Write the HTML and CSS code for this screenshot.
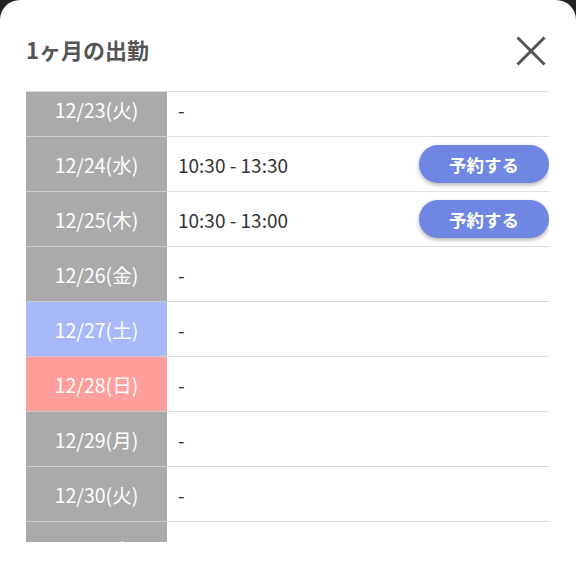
FILE: index.html
```html
<!DOCTYPE html>
<html lang="ja">
<head>
<meta charset="utf-8">
<link rel="stylesheet" href="styles.css">
</head>
<body>
<div class="sheet">
  <div class="header">
    <h1 class="title">1ヶ月の出勤</h1>
    <svg class="close" width="30" height="30" viewBox="0 0 30 30">
      <path d="M1.5 1.5 L28.5 28.5 M28.5 1.5 L1.5 28.5" stroke="#555" stroke-width="3" stroke-linecap="butt"/>
    </svg>
  </div>
  <div class="list">
    <div class="rows">
      <div class="row"><div class="date">12/23(火)</div><div class="cell">-</div></div>
      <div class="row"><div class="date">12/24(水)</div><div class="cell"><span>10:30 - 13:30</span><button class="reserve">予約する</button></div></div>
      <div class="row"><div class="date">12/25(木)</div><div class="cell"><span>10:30 - 13:00</span><button class="reserve">予約する</button></div></div>
      <div class="row"><div class="date">12/26(金)</div><div class="cell">-</div></div>
      <div class="row"><div class="date sat">12/27(土)</div><div class="cell">-</div></div>
      <div class="row"><div class="date sun">12/28(日)</div><div class="cell">-</div></div>
      <div class="row"><div class="date">12/29(月)</div><div class="cell">-</div></div>
      <div class="row"><div class="date">12/30(火)</div><div class="cell">-</div></div>
      <div class="row"><div class="date">12/31(水)</div><div class="cell">-</div></div>
    </div>
  </div>
</div>
</body>
</html>
```
FILE: styles.css
```css
html, body {
  margin: 0;
  padding: 0;
  background: #222;
}
body {
  font-family: "Noto Sans CJK JP", "Noto Sans", sans-serif;
}
.sheet {
  background: #fff;
  border-radius: 20px 20px 0 0;
  height: 581px;
  box-sizing: border-box;
  padding: 0 27px 0 26px;
  overflow: hidden;
}
.header {
  height: 91px;
  box-sizing: border-box;
  padding-top: 10px;
  padding-right: 3px;
  display: flex;
  align-items: center;
  justify-content: space-between;
}
.title {
  margin: 0 0 4px;
  font-size: 22px;
  font-weight: 700;
  color: #555;
  line-height: 1;
}
.close {
  display: block;
}
.list {
  height: 451px;
  box-sizing: border-box;
  border-top: 1px solid #ddd;
  overflow: hidden;
}
.rows {
  margin-top: -10px;
}
.row {
  display: grid;
  grid-template-columns: 141px 1fr;
  height: 55px;
}
.date {
  background: #aaa;
  color: #fff;
  font-size: 19.5px;
  display: flex;
  align-items: center;
  justify-content: center;
  border-bottom: 1px solid #ccc;
}
.date.sat {
  background: #a8b9fa;
}
.date.sun {
  background: #ff9e9b;
}
.cell {
  display: flex;
  align-items: center;
  justify-content: space-between;
  padding-left: 11px;
  font-size: 19px;
  color: #333;
  border-bottom: 1px solid #ddd;
}
.reserve {
  width: 130px;
  height: 38px;
  border: none;
  border-radius: 19px;
  background: #6f87e2;
  color: #fff;
  font-family: inherit;
  font-size: 17.5px;
  font-weight: 700;
  box-shadow: 0 2px 4px rgba(0, 0, 0, 0.3);
  padding: 0;
}
```
